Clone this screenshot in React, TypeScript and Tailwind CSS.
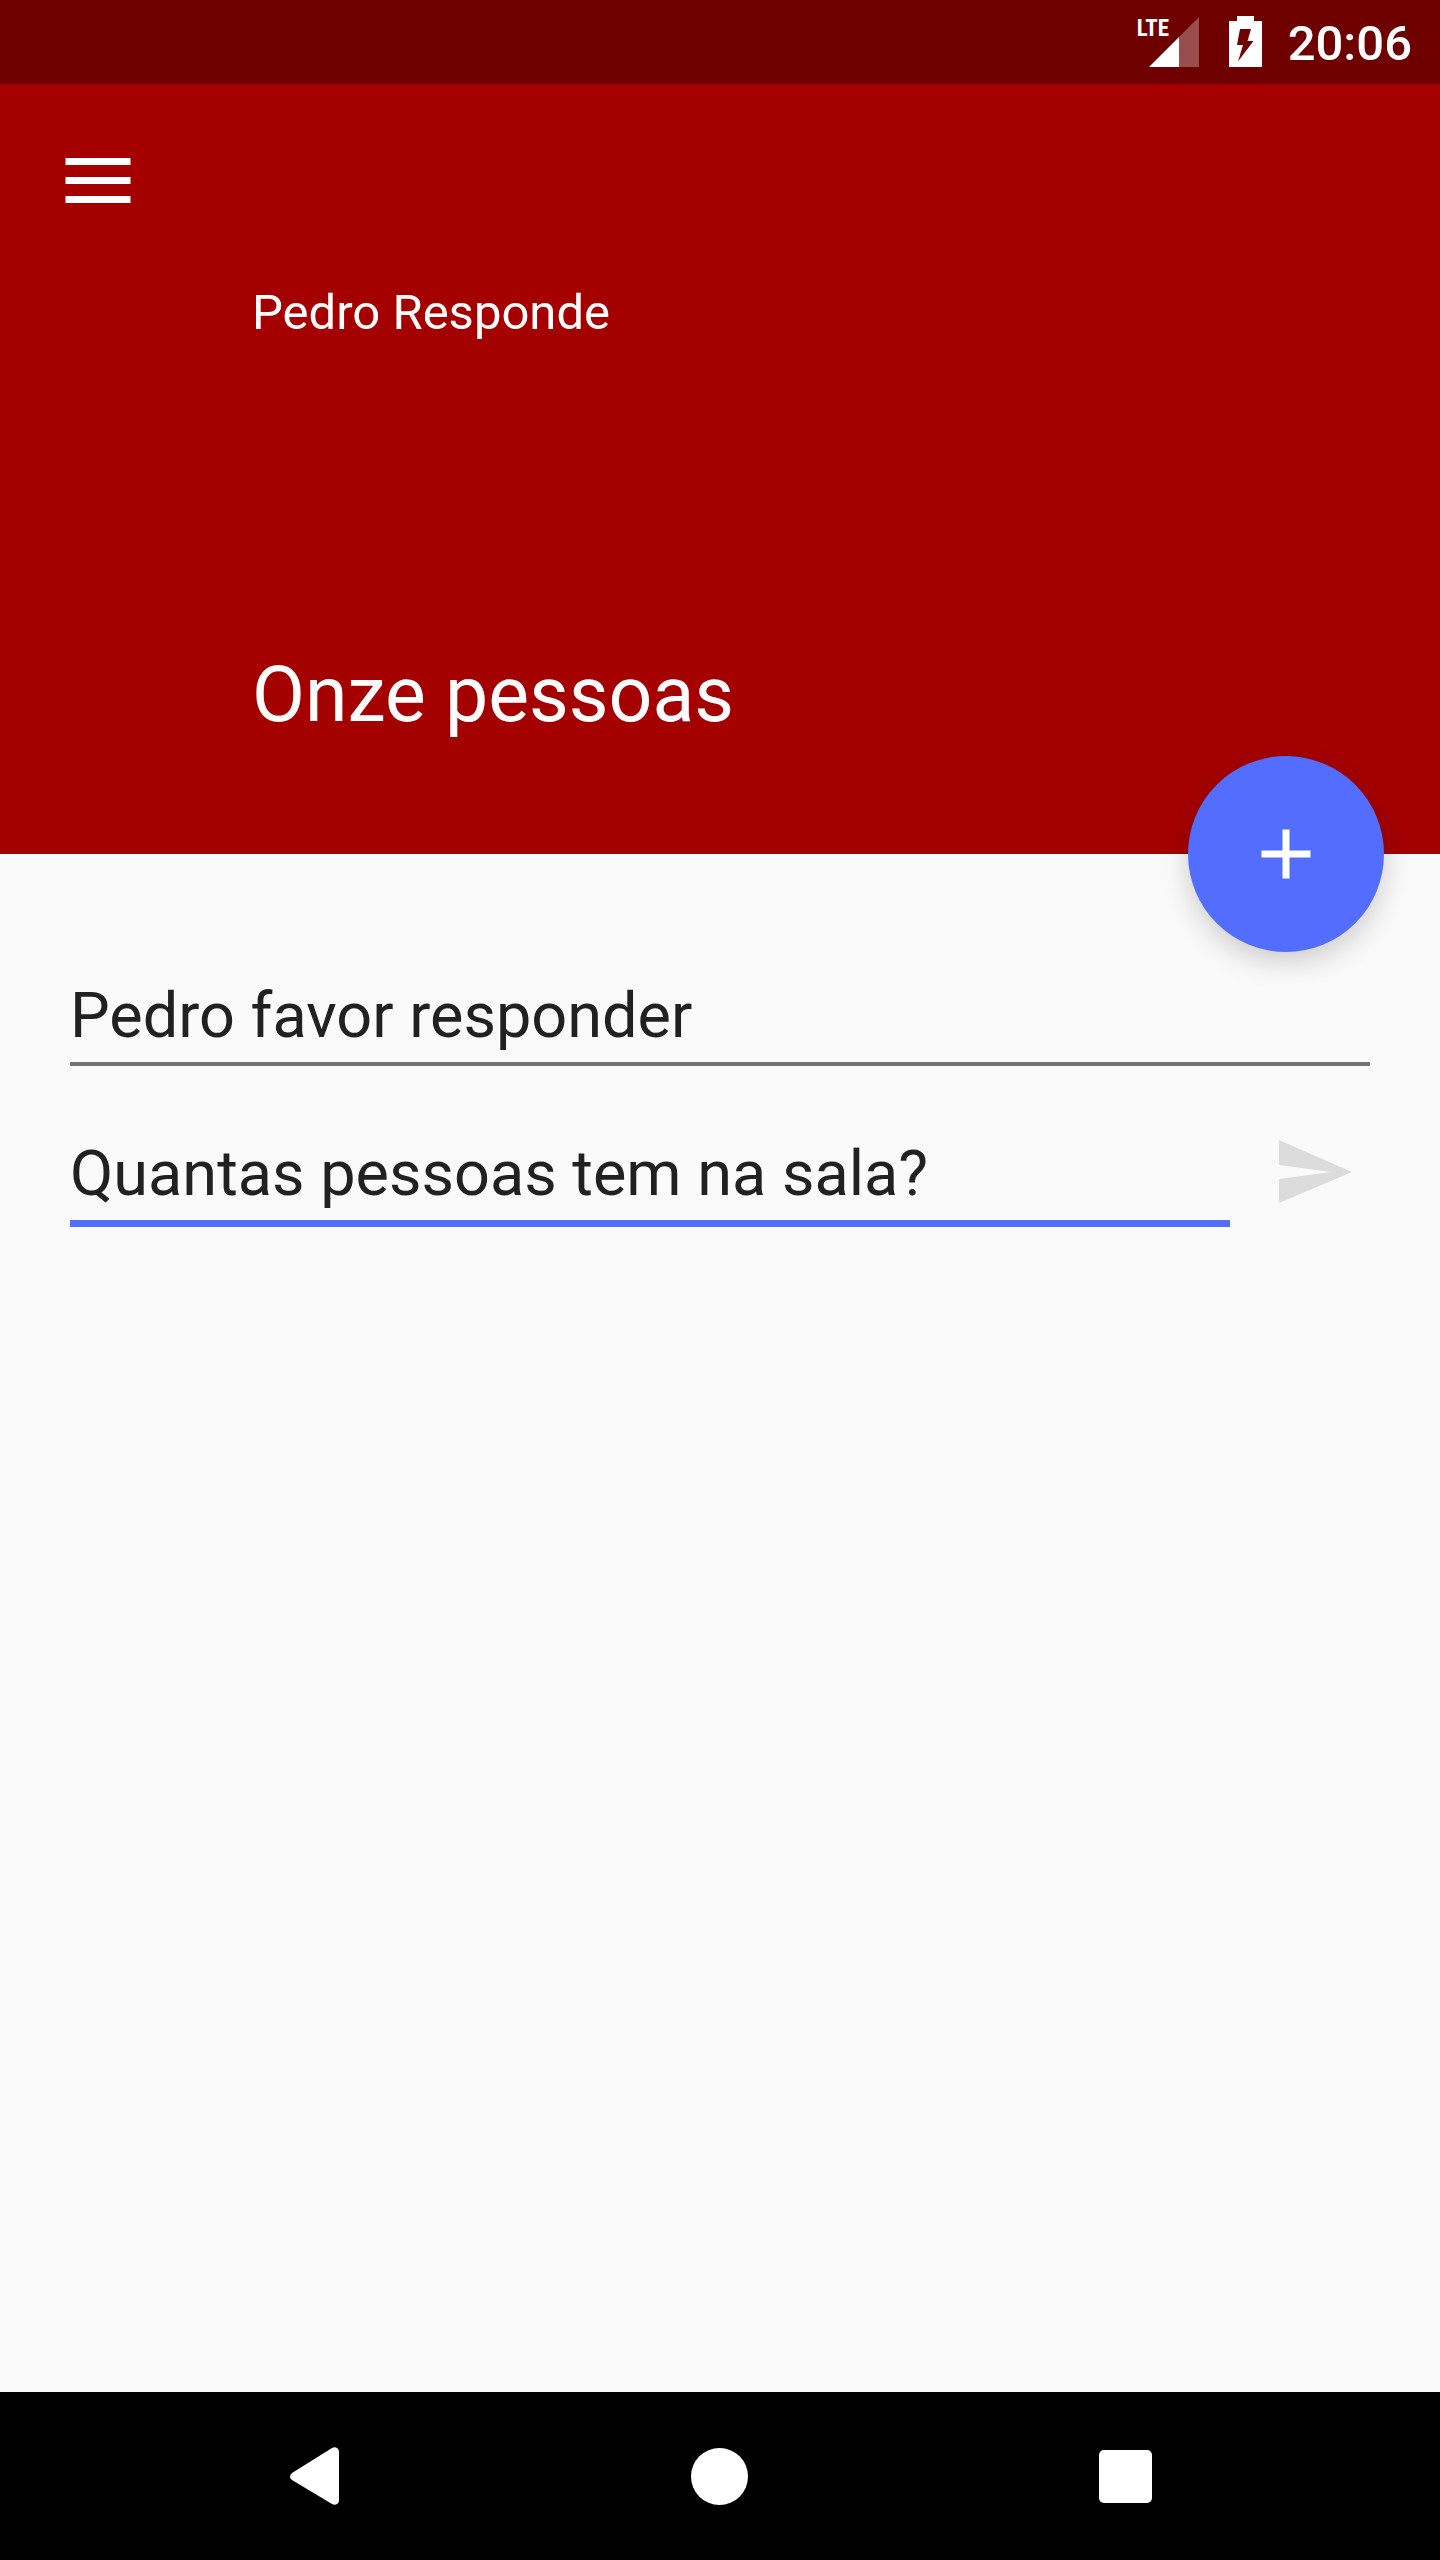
import React from 'react';

function StatusBar() {
  return (
    <div className="flex h-[84px] items-start justify-end bg-[#6f0000] pt-4 pr-[28px] text-white">
      {/* Mobile network */}
      <div className="relative mr-[30px] h-[51px] w-[62px]">
        <svg viewBox="0 0 62 51" className="h-full w-full" aria-hidden="true">
          <path d="M42 21L62 1v50H42z" fill="white" fillOpacity="0.3" />
          <path d="M12 51L42 21v30z" fill="white" />
        </svg>
        <span className="absolute top-0 left-0 font-['Roboto_Condensed','Roboto',sans-serif] text-[23px] leading-[26px] font-bold">
          LTE
        </span>
      </div>

      {/* Battery */}
      <svg viewBox="0 0 33 51" className="mr-[26px] h-[51px] w-[33px]" aria-hidden="true">
        <path
          fill="white"
          fillRule="evenodd"
          d="M8 0h17v5h8v46H0V5h8zM11 13L8 29h6L9 45.5 24.500 25H18.500L22 13z"
        />
      </svg>

      <time className="text-[49px] leading-[56px] font-medium">20:06</time>
    </div>
  );
}

function Header() {
  return (
    <header className="relative bg-[#a40000] px-[41px] pt-[49px] pb-[115px] text-white">
      <button type="button" aria-label="Menu" className="block p-6">
        <svg viewBox="0 0 66 47" className="h-[47px] w-[66px]" aria-hidden="true">
          <path d="M.5 1h65v7H.5zM.5 20h65v7H.5zM.5 39h65v7H.5z" fill="white" />
        </svg>
      </button>
      <div className="mt-[57px] pl-[211px]">
        <p className="text-[49px] leading-[56px]">Pedro Responde</p>
        <h1 className="mt-[310px] text-[77px] leading-[88px]">Onze pessoas</h1>
      </div>

      {/* Floating action button */}
      <button
        type="button"
        aria-label="Adicionar"
        className="absolute right-14 -bottom-[98px] flex size-[196px] items-center justify-center rounded-full bg-[#536dfe] shadow-[0_10px_28px_rgba(0,0,0,0.18)]"
      >
        <svg viewBox="0 0 50 50" className="size-[50px]" aria-hidden="true">
          <path d="M21.500 .5h7v21h21v7h-21v21h-7v-21H.5v-7h21z" fill="white" />
        </svg>
      </button>
    </header>
  );
}

function QuestionForm() {
  return (
    <form className="flex flex-col gap-[65px] px-[70px] pt-[119px]" onSubmit={(e) => e.preventDefault()}>
      <input
        type="text"
        aria-label="Pedido"
        defaultValue="Pedro favor responder"
        className="h-[93px] w-full border-b-4 border-[#747474] pb-[5px] text-[63px] leading-[84px] outline-none"
      />
      <div className="flex items-start">
        <input
          type="text"
          aria-label="Pergunta"
          defaultValue="Quantas pessoas tem na sala?"
          className="h-24 min-w-0 flex-1 border-b-[7px] border-[#536dfe] pb-[5px] text-[63px] leading-[84px] outline-none"
        />
        <button type="submit" aria-label="Enviar" disabled className="flex w-[140px] justify-end pr-[14px]">
          <svg viewBox="0 0 84 84" className="size-[84px]" aria-hidden="true">
            <path d="M7 72l73-31L7 9v25l52 7-52 7z" fill="#dcdcdc" />
          </svg>
        </button>
      </div>
    </form>
  );
}

function NavigationBar() {
  return (
    <nav className="grid h-[168px] grid-cols-3 bg-black px-28">
      <button type="button" aria-label="Voltar" className="flex items-center justify-center">
        <svg viewBox="0 0 49 58" className="h-[58px] w-[49px]" aria-hidden="true">
          <path
            d="M2 26L42 1Q44 0 46 .5 49 1.500 49 5v48q0 3.500-3 4.500-2 .5-4-.5L2 33Q0 31.500 0 29.500T2 26z"
            fill="white"
          />
        </svg>
      </button>
      <button type="button" aria-label="Início" className="flex items-center justify-center">
        <span className="size-[57px] rounded-full bg-white" />
      </button>
      <button type="button" aria-label="Recentes" className="flex items-center justify-center">
        <span className="size-[53px] rounded-[5px] bg-white" />
      </button>
    </nav>
  );
}

export default function App() {
  return (
    <div className="flex min-h-screen flex-col bg-[#fafafa] font-['Roboto',sans-serif] text-[#212121]">
      <StatusBar />
      <Header />
      <main className="flex-1">
        <QuestionForm />
      </main>
      <NavigationBar />
    </div>
  );
}
